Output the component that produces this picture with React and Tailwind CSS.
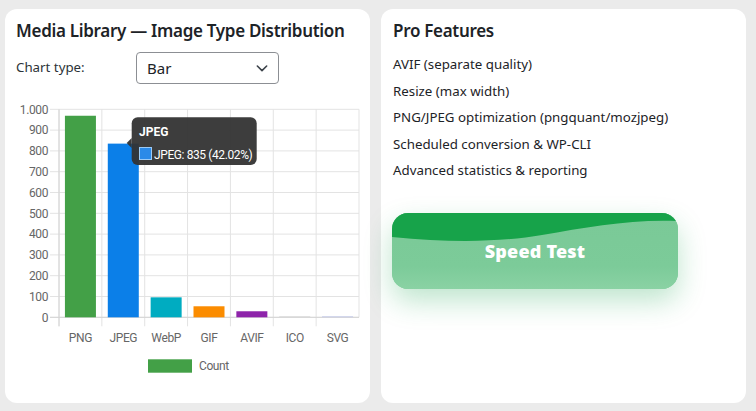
import React from "react";

const data = [
  { label: "PNG", value: 969, color: "#43a047" },
  { label: "JPEG", value: 835, color: "#0b7fe8" },
  { label: "WebP", value: 96, color: "#00acc1" },
  { label: "GIF", value: 53, color: "#fb8c00" },
  { label: "AVIF", value: 29, color: "#8e24aa" },
  { label: "ICO", value: 1, color: "#d7d7d7" },
  { label: "SVG", value: 4, color: "#c5cae9" },
];

const features = [
  "AVIF (separate quality)",
  "Resize (max width)",
  "PNG/JPEG optimization (pngquant/mozjpeg)",
  "Scheduled conversion & WP-CLI",
  "Advanced statistics & reporting",
];

const chartFont = "Roboto, 'Liberation Sans', Arial, sans-serif";

function BarChart() {
  const left = 43;
  const right = 343;
  const zero = 222.3;
  const scale = 0.208;
  const step = (right - left) / data.length;
  const ticks = [0, 100, 200, 300, 400, 500, 600, 700, 800, 900, 1000];

  return (
    <svg width="354" height="290" className="block">
      {ticks.map((t) => {
        const y = zero - t * scale;
        return (
          <g key={t}>
            <line x1="34" x2={right} y1={y} y2={y} stroke="#e3e3e3" strokeWidth="1" />
            <text
              x="32"
              y={y + 4.2}
              textAnchor="end"
              fontSize="12"
              fill="#666"
              fontFamily={chartFont}
              letterSpacing="-0.4"
            >
              {t === 1000 ? "1.000" : t}
            </text>
          </g>
        );
      })}
      {data.map((d, i) => (
        <line
          key={d.label}
          x1={left + i * step}
          x2={left + i * step}
          y1={zero - 1000 * scale}
          y2={zero + 9}
          stroke="#e3e3e3"
          strokeWidth="1"
        />
      ))}
      <line x1={right} x2={right} y1={zero - 1000 * scale} y2={zero} stroke="#e3e3e3" />
      <line x1={left} x2={left} y1={zero - 1000 * scale} y2={zero + 9} stroke="#d4d4d4" />
      <line x1="34" x2={right} y1={zero} y2={zero} stroke="#d4d4d4" />

      {data.map((d, i) => {
        const h = Math.max(d.value * scale, 1);
        const cx = left + i * step + step / 2;
        return (
          <g key={d.label}>
            <rect x={cx - 15.5} y={zero - h} width="31" height={h} fill={d.color} />
            <text
              x={cx}
              y="246.5"
              textAnchor="middle"
              fontSize="12"
              fill="#666"
              fontFamily={chartFont}
              letterSpacing="-0.4"
            >
              {d.label}
            </text>
          </g>
        );
      })}

      {/* legend */}
      <rect x="132" y="264.3" width="44" height="13.4" fill="#43a047" />
      <text x="183" y="274.5" fontSize="12" fill="#666" fontFamily={chartFont} letterSpacing="-0.4">
        Count
      </text>

      {/* tooltip */}
      <path d="M115.7 43 L110.7 48 L115.7 53 Z" fill="#333" fillOpacity="0.95" />
      <rect x="115.7" y="22.3" width="125" height="47.7" rx="6" fill="#333" fillOpacity="0.95" />
      <text x="123" y="41" fontSize="12" fontWeight="700" fill="#fff" fontFamily={chartFont}>
        JPEG
      </text>
      <rect x="123.5" y="52.5" width="12" height="12" fill="#2b8ae8" stroke="#9ccaf5" strokeWidth="1" />
      <text x="138" y="63.5" fontSize="12" fill="#fff" fontFamily={chartFont} letterSpacing="-0.4">
        JPEG: 835 (42.02%)
      </text>
    </svg>
  );
}

function SpeedTestButton() {
  return (
    <button className="relative mt-[29px] ml-[-1px] w-[286px] h-[76px] rounded-[16px] overflow-hidden bg-[#7ccb99] shadow-[0_12px_28px_rgba(22,163,74,0.28)]">
      <svg width="286" height="76" className="absolute inset-0">
        <defs>
          <linearGradient id="fade" x1="0" y1="0" x2="0" y2="1">
            <stop offset="0" stopColor="#7ac997" />
            <stop offset="0.7" stopColor="#7ccb99" />
            <stop offset="1" stopColor="#8ad2a4" />
          </linearGradient>
        </defs>
        <rect width="286" height="76" fill="url(#fade)" />
        <path
          d="M0 0 H286 V8 C240 6 195 14 150 22 C110 29 60 30 0 24 Z"
          fill="#17a34a"
        />
      </svg>
      <span className="relative text-white text-[18px] font-black tracking-[0.2px] font-['Noto_Sans',sans-serif] top-[1px]">
        Speed Test
      </span>
    </button>
  );
}

export default function App() {
  return (
    <div className="w-[756px] h-[411px] bg-[#ebebeb] flex gap-[11px] pl-[5px] pt-[9px] font-['Noto_Sans','Open_Sans',sans-serif] text-[#1d2327]">
      <div className="w-[365px] h-[394px] bg-white rounded-[12px] px-[11px] pt-[10px]">
        <h2 className="text-[17px] leading-[24px] font-semibold tracking-[-0.3px]">
          Media Library — Image Type Distribution
        </h2>
        <div className="flex items-center mt-[9px]">
          <label className="w-[120px] text-[13.3px] text-[#2c3338]">Chart type:</label>
          <div className="w-[143px] h-[32px] border border-[#8c8f94] rounded-[4px] flex items-center justify-between pl-[10px] pr-[8px] text-[15px]">
            <span>Bar</span>
            <svg width="16" height="16" viewBox="0 0 24 24" fill="none" stroke="#3c434a" strokeWidth="2.4" strokeLinecap="round" strokeLinejoin="round">
              <path d="M5 9 L12 16 L19 9" />
            </svg>
          </div>
        </div>
        <div className="mt-[11px]">
          <BarChart />
        </div>
      </div>

      <div className="w-[365px] h-[394px] bg-white rounded-[12px] px-[12px] pt-[10px]">
        <h2 className="text-[17px] leading-[24px] font-semibold tracking-[-0.3px]">Pro Features</h2>
        <ul className="mt-[8px] text-[13.3px] text-[#1d2327]">
          {features.map((f) => (
            <li key={f} className="h-[26.6px] leading-[26.6px]">
              {f}
            </li>
          ))}
        </ul>
        <SpeedTestButton />
      </div>
    </div>
  );
}
